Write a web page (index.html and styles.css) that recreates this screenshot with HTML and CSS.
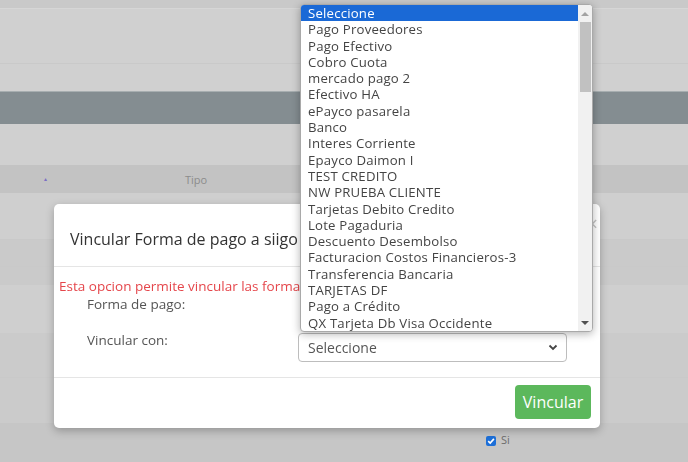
FILE: index.html
```html
<!DOCTYPE html>
<html lang="es">
<head>
    <meta charset="utf-8">
    <meta name="viewport" content="width=device-width, initial-scale=1.0">
    <title>Vincular forma de pago</title>
    <link rel="stylesheet" href="styles.css">
</head>
<body>
    <main class="pagina">
        <div class="fila fila-top"></div>
        <div class="fila fila-a"></div>
        <div class="fila fila-b"></div>
        <div class="fila fila-oscura"></div>
        <div class="fila fila-c"></div>
        <div class="fila fila-cabecera">
            <span class="orden">&#9652;</span>
            <span class="col-tipo">Tipo</span>
        </div>
        <div class="fila fila-d"></div>
        <div class="fila fila-e"></div>
        <div class="fila fila-f"></div>
        <div class="fila fila-g"></div>
        <div class="fila fila-h"></div>
        <div class="fila fila-i"></div>
        <div class="fila fila-check">
            <span class="check">
                <svg width="10" height="10" viewBox="0 0 10 10"><path d="M2.2 5.2 L4.2 7.1 L7.9 2.9" fill="none" stroke="#fff" stroke-width="1.6"/></svg>
            </span>
            <span class="check-txt">Si</span>
        </div>
    </main>

    <section class="modal">
        <div class="modal-header">
            <h4 class="modal-titulo">Vincular Forma de pago a siigo</h4>
            <span class="cerrar">&times;</span>
        </div>
        <div class="modal-body">
            <p class="aviso">Esta opcion permite vincular las formas de pago con siigo</p>
            <div class="campo campo-1">
                <label>Forma de pago:</label>
                <div class="select-hueco"></div>
            </div>
            <div class="campo">
                <label>Vincular con:</label>
                <div class="select">
                    <span>Seleccione</span>
                    <svg width="10" height="7" viewBox="0 0 10 7"><path d="M1.5 1.5 L5 5 L8.5 1.5" fill="none" stroke="#444" stroke-width="1.8"/></svg>
                </div>
            </div>
        </div>
        <div class="modal-footer">
            <button class="btn-vincular">Vincular</button>
        </div>
    </section>

    <div class="lista">
        <ul class="opciones">
            <li class="activa">Seleccione</li>
            <li>Pago Proveedores</li>
            <li>Pago Efectivo</li>
            <li>Cobro Cuota</li>
            <li>mercado pago 2</li>
            <li>Efectivo HA</li>
            <li>ePayco pasarela</li>
            <li>Banco</li>
            <li>Interes Corriente</li>
            <li>Epayco Daimon I</li>
            <li>TEST CREDITO</li>
            <li>NW PRUEBA CLIENTE</li>
            <li>Tarjetas Debito Credito</li>
            <li>Lote Pagaduria</li>
            <li>Descuento Desembolso</li>
            <li>Facturacion Costos Financieros-3</li>
            <li>Transferencia Bancaria</li>
            <li>TARJETAS DF</li>
            <li>Pago a Crédito</li>
            <li>QX Tarjeta Db Visa Occidente</li>
        </ul>
        <div class="scroll">
            <span class="flecha flecha-arriba"></span>
            <span class="barra"></span>
            <span class="flecha flecha-abajo"></span>
        </div>
    </div>
</body>
</html>
```

FILE: styles.css
```css
body{
    margin: 0;
    background-color: #c6c6c6;
    font-family: "Open Sans", "DejaVu Sans", sans-serif;
    overflow: hidden;
}

.pagina{
    display: flex;
    flex-direction: column;
}
.fila{
    background-color: #d0d0d0;
    border-bottom: 1px solid #c9c9c9;
    box-sizing: border-box;
}
.fila-top{ height: 9px; background-color: #c9c9c9; border-bottom-color: #d6d6d6; }
.fila-a{ height: 55px; }
.fila-b{ height: 27px; border-bottom: 0; }
.fila-oscura{ height: 33px; background-color: #848d91; border-top: 1px solid #a7aeb0; border-bottom: 0; }
.fila-c{ height: 41px; border-bottom: 0; }
.fila-cabecera{
    height: 28px;
    background-color: #c3c3c3;
    border-bottom: 0;
    display: flex;
    align-items: center;
    font-size: 11px;
    color: #8c8c8c;
}
.orden{
    color: #7a6fc4;
    font-size: 6px;
    margin-left: 44px;
}
.col-tipo{
    margin-left: 138px;
}
.fila-d{ height: 47px; background-color: #cfcfcf; }
.fila-e{ height: 27px; background-color: #cacaca; }
.fila-f{ height: 18px; background-color: #cacaca; border-bottom: 0; }
.fila-g{ height: 48px; background-color: #cfcfcf; border-bottom: 0; }
.fila-h{ height: 45px; background-color: #cbcbcb; }
.fila-i{ height: 45px; background-color: #cbcbcb; border-bottom: 0; }
.fila-check{
    height: 39px;
    background-color: #c6c6c6;
    border-bottom: 0;
    display: flex;
    align-items: flex-start;
    padding-top: 13px;
    padding-left: 486px;
}
.check{
    width: 10px;
    height: 10px;
    border-radius: 2px;
    background-color: #1d6fd8;
    display: flex;
}
.check-txt{
    font-size: 11px;
    color: #6c6c6c;
    margin-left: 5px;
    margin-top: -4px;
}

/* modal */
.modal{
    position: fixed;
    left: 54px;
    top: 204px;
    width: 546px;
    height: 224px;
    background-color: #fff;
    border-radius: 5px;
    box-shadow: 0 3px 9px rgba(0,0,0,0.25);
    display: flex;
    flex-direction: column;
}
.modal-header{
    position: relative;
    padding: 24px 16px 16px;
    border-bottom: 1px solid #e5e5e5;
}
.modal-titulo{
    margin: 0;
    font-size: 16px;
    font-weight: 400;
    line-height: 22px;
    color: #333;
}
.cerrar{
    position: absolute;
    right: 2px;
    top: 6px;
    font-size: 20px;
    color: #c4c4c4;
}
.modal-body{
    padding: 10px 0 15px 5px;
    font-size: 13.5px;
    color: #555;
}
.aviso{
    margin: 0;
    width: 241px;
    line-height: 18px;
    color: #e5464b;
    white-space: nowrap;
    overflow: hidden;
}
.campo{
    display: flex;
    align-items: flex-start;
    padding-left: 28px;
}
.campo label{
    width: 211px;
    line-height: 18px;
}
.campo-1{
    height: 36px;
}
.select-hueco{
    width: 269px;
}
.select{
    margin-top: 2px;
    width: 269px;
    height: 29px;
    box-sizing: border-box;
    border: 1px solid #bdbdbd;
    border-radius: 4px;
    display: flex;
    align-items: center;
    justify-content: space-between;
    padding: 0 8px 0 9px;
    font-size: 14px;
    color: #555;
}
.modal-footer{
    border-top: 1px solid #e5e5e5;
    display: flex;
    justify-content: flex-end;
    padding: 7px 9px 0 0;
}
.btn-vincular{
    width: 76px;
    height: 34px;
    border: 0;
    border-radius: 4px;
    background-color: #5cb85c;
    color: #fff;
    font-family: "Open Sans", "DejaVu Sans", sans-serif;
    font-size: 16px;
}

/* lista desplegada */
.lista{
    position: absolute;
    left: 300px;
    top: 4px;
    width: 293px;
    height: 328px;
    box-sizing: border-box;
    background-color: #fff;
    border: 1px solid #a9a9a9;
    border-radius: 4px;
    box-shadow: 0 2px 8px rgba(0,0,0,0.3);
    display: flex;
    overflow: hidden;
}
.opciones{
    list-style: none;
    margin: 0;
    padding: 0;
    flex: 1;
    font-size: 13.2px;
    letter-spacing: 0.2px;
    color: #444;
}
.opciones li{
    height: 16.3px;
    line-height: 16px;
    padding-left: 7px;
    white-space: nowrap;
}
.opciones .activa{
    background-color: #1a69d6;
    color: #fff;
}
.scroll{
    width: 14px;
    background-color: #f1f1f1;
    display: flex;
    flex-direction: column;
    align-items: center;
}
.flecha{
    width: 0;
    height: 0;
    border-left: 4px solid transparent;
    border-right: 4px solid transparent;
}
.flecha-arriba{
    margin-top: 7px;
    border-bottom: 4px solid #a3a3a3;
}
.barra{
    margin-top: 6px;
    width: 11px;
    height: 70px;
    background-color: #c1c1c1;
}
.flecha-abajo{
    margin-top: auto;
    margin-bottom: 6px;
    border-top: 4px solid #505050;
}
```
